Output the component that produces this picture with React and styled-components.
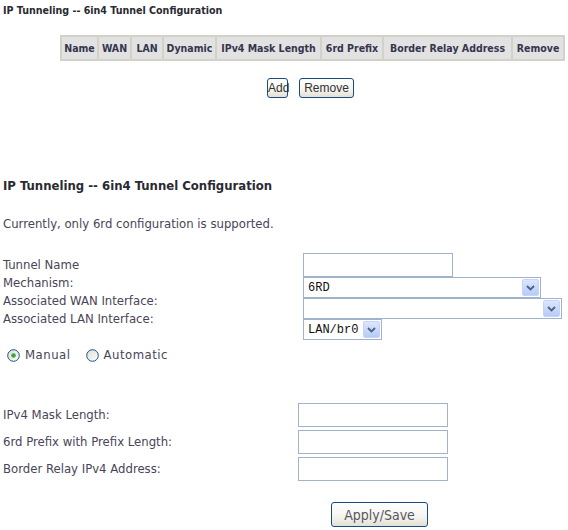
import React from 'react';
import styled, { createGlobalStyle } from 'styled-components';

const GlobalStyle = createGlobalStyle`
  body {
    margin: 0;
    background: #fff;
    font-family: "DejaVu Sans Condensed", "DejaVu Sans", sans-serif;
    color: #4a4458;
  }
`;

const Page = styled.div`
  width: 568px;
  height: 530px;
  overflow: hidden;
  padding-left: 3px;
  box-sizing: border-box;
`;

const Title = styled.div`
  font-weight: bold;
  color: #2a2a32;
  font-size: ${p => p.$size}px;
  line-height: 16px;
  margin-top: ${p => p.$top}px;
  white-space: nowrap;
`;

const Grid = styled.table`
  margin: 17px 0 0 57px;
  border-collapse: collapse;
  border: 2px solid #d2d2ca;
  table-layout: fixed;
`;

const HeadCell = styled.th`
  width: ${p => p.$w}px;
  box-sizing: border-box;
  background: #e2e2e2;
  border: 2px solid #d2d2ca;
  color: #35354c;
  font-size: 10.5px;
  font-weight: bold;
  height: 24px;
  padding: 0;
  white-space: nowrap;
  overflow: hidden;
`;

const ButtonRow = styled.div`
  display: flex;
  gap: 11px;
  margin: 17px 0 0 264px;
`;

const XpButton = styled.button`
  height: ${p => p.$h || 20}px;
  width: ${p => p.$w}px;
  padding: 0;
  border: 1px solid #1c4a82;
  border-radius: 3px;
  background: linear-gradient(#ffffff, #f4f4ef 60%, #e2e0d4);
  color: ${p => p.$big ? '#5a5560' : '#333'};
  font-family: ${p => p.$big ? '"DejaVu Sans Condensed", "DejaVu Sans", sans-serif' : '"Liberation Sans", Arial, sans-serif'};
  font-size: ${p => p.$big ? 14 : 12}px;
  cursor: pointer;
`;

const Note = styled.div`
  font-size: 13px;
  line-height: 16px;
  margin-top: 22px;
`;

const Form = styled.div`
  display: grid;
  grid-template-columns: ${p => p.$label}px auto;
  margin-top: ${p => p.$top}px;
  align-items: start;
`;

const LabelCol = styled.div`
  display: flex;
  flex-direction: column;
  gap: ${p => p.$gap || 0}px;
  padding-top: ${p => p.$pad || 0}px;
  font-size: 13px;
  line-height: ${p => p.$lh}px;
  white-space: nowrap;
`;

const FieldCol = styled.div`
  display: flex;
  flex-direction: column;
  gap: ${p => p.$gap}px;
  align-items: flex-start;
`;

const TextBox = styled.input`
  box-sizing: border-box;
  width: 150px;
  height: 24px;
  border: 1px solid #9fb3cc;
  margin: 0;
  padding: 0 3px;
`;

const SelectBox = styled.div`
  box-sizing: border-box;
  display: flex;
  align-items: center;
  width: ${p => p.$w}px;
  height: ${p => p.$h || 21}px;
  border: 1px solid #9fb3cc;
  padding: 1px;
  background: #fff;
`;

const SelectValue = styled.span`
  flex: 1;
  padding-left: 3px;
  font-family: "Liberation Mono", "DejaVu Sans Mono", monospace;
  font-size: 12px;
  color: #111;
`;

const Arrow = styled.span`
  width: 17px;
  height: 17px;
  box-sizing: border-box;
  display: flex;
  align-items: center;
  justify-content: center;
  border: 1px solid #c3d3fd;
  border-radius: 2px;
  background: linear-gradient(#dbe6fe, #b7cbf6);
`;

const RadioRow = styled.div`
  display: flex;
  align-items: center;
  gap: 5px;
  margin: 7px 0 0 4px;
  font-size: 13px;
  letter-spacing: 0.5px;
  line-height: 16px;
`;

const RadioText = styled.span`
  margin-right: 10px;
`;

const SaveRow = styled.div`
  margin: 21px 0 0 328px;
`;

function Chevron() {
  return (
    <svg width="9" height="6" viewBox="0 0 9 6">
      <path d="M1 1 L4.5 4.5 L8 1" fill="none" stroke="#4d6185" strokeWidth="1.8" />
    </svg>
  );
}

function Select({ value, width }) {
  return (
    <SelectBox $w={width}>
      <SelectValue>{value}</SelectValue>
      <Arrow><Chevron /></Arrow>
    </SelectBox>
  );
}

function Radio({ checked }) {
  return (
    <svg width="13" height="13" viewBox="0 0 13 13">
      <defs>
        <linearGradient id="rg" x1="0" y1="0" x2="1" y2="1">
          <stop offset="0" stopColor="#dcdcd6" />
          <stop offset="1" stopColor="#ffffff" />
        </linearGradient>
      </defs>
      <circle cx="6.5" cy="6.5" r="5.8" fill="url(#rg)" stroke="#1c5180" strokeWidth="1" />
      {checked && <circle cx="6.5" cy="6.5" r="2.3" fill="#3fa43a" />}
    </svg>
  );
}

const columns = [
  ['Name', 37], ['WAN', 33], ['LAN', 32], ['Dynamic', 53],
  ['IPv4 Mask Length', 105], ['6rd Prefix', 62], ['Border Relay Address', 129], ['Remove', 52],
];

export default function App() {
  return (
    <Page>
      <GlobalStyle />
      <Title $size={10.6} $top={2}>IP Tunneling -- 6in4 Tunnel Configuration</Title>
      <Grid>
        <thead>
          <tr>
            {columns.map(([c, w]) => <HeadCell key={c} $w={w}>{c}</HeadCell>)}
          </tr>
        </thead>
      </Grid>
      <ButtonRow>
        <XpButton $w={21}>Add</XpButton>
        <XpButton $w={55}>Remove</XpButton>
      </ButtonRow>

      <Title $size={13} $top={80}>IP Tunneling -- 6in4 Tunnel Configuration</Title>
      <Note>Currently, only 6rd configuration is supported.</Note>

      <Form $label={300} $top={21}>
        <LabelCol $pad={3} $lh={18}>
          <span>Tunnel Name</span>
          <span>Mechanism:</span>
          <span>Associated WAN Interface:</span>
          <span>Associated LAN Interface:</span>
        </LabelCol>
        <FieldCol $gap={0}>
          <TextBox type="text" />
          <Select value="6RD" width={238} />
          <Select value="" width={259} />
          <Select value="LAN/br0" width={79} />
        </FieldCol>
      </Form>
      <RadioRow>
        <Radio checked />
        <RadioText>Manual</RadioText>
        <Radio />
        <RadioText>Automatic</RadioText>
      </RadioRow>

      <Form $label={295} $top={40}>
        <LabelCol $lh={24} $gap={3}>
          <span>IPv4 Mask Length:</span>
          <span>6rd Prefix with Prefix Length:</span>
          <span>Border Relay IPv4 Address:</span>
        </LabelCol>
        <FieldCol $gap={3}>
          <TextBox type="text" />
          <TextBox type="text" />
          <TextBox type="text" />
        </FieldCol>
      </Form>
      <SaveRow>
        <XpButton $big $w={97} $h={25}>Apply/Save</XpButton>
      </SaveRow>
    </Page>
  );
}
